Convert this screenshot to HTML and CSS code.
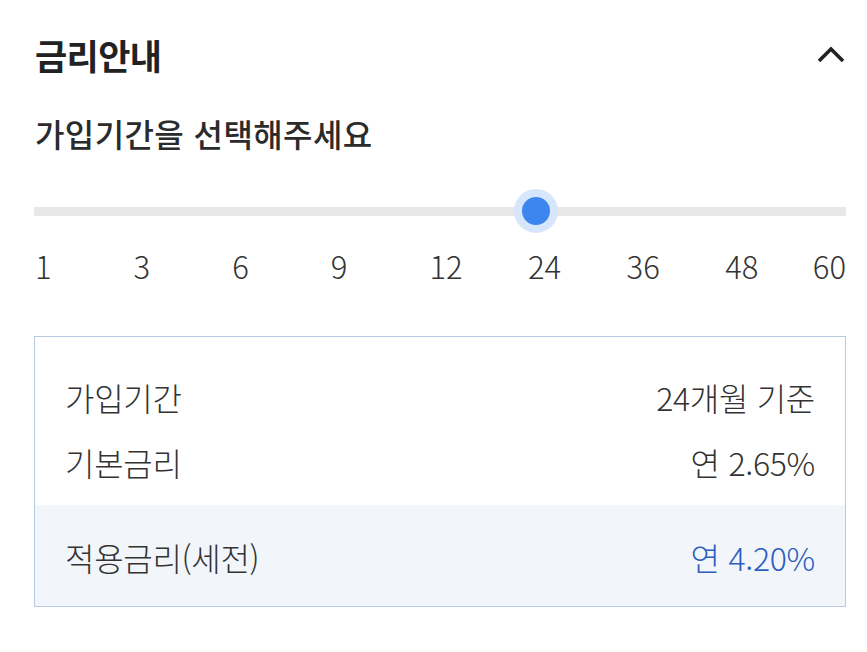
FILE: index.html
```html
<!DOCTYPE html>
<html lang="ko">
<head>
<meta charset="utf-8">
<title>금리안내</title>
<link rel="stylesheet" href="styles.css">
</head>
<body>
<main class="panel">
  <header class="head">
    <h2 class="title">금리안내</h2>
    <button class="toggle" type="button" aria-label="접기">
      <svg width="28" height="18" viewBox="0 0 28 18"><polyline points="2,16 14,4 26,16" fill="none" stroke="#222" stroke-width="3.6" stroke-linecap="butt" stroke-linejoin="miter"/></svg>
    </button>
  </header>
  <h3 class="subtitle">가입기간을 선택해주세요</h3>
  <div class="slider">
    <input class="range" type="range" min="0" max="8" step="1" value="5" aria-label="가입기간">
  </div>
  <div class="ticks">
    <span>1</span><span>3</span><span>6</span><span>9</span><span>12</span><span>24</span><span>36</span><span>48</span><span class="last">60</span>
  </div>
  <section class="card">
    <div class="card-top">
      <div class="row"><span>가입기간</span><span>24개월 기준</span></div>
      <div class="row"><span>기본금리</span><span>연 2.65%</span></div>
    </div>
    <div class="card-bottom">
      <div class="row"><span>적용금리(세전)</span><span class="accent">연 4.20%</span></div>
    </div>
  </section>
</main>
</body>
</html>
```
FILE: styles.css
```css
html, body {
  margin: 0;
  padding: 0;
  background: #fff;
}
body {
  font-family: "Noto Sans CJK KR", "Noto Sans", sans-serif;
  color: #2b2b2b;
}
.panel {
  padding: 30px 21px 0 35px;
}
.head {
  display: flex;
  align-items: center;
  justify-content: space-between;
  height: 50px;
}
.title {
  margin: 0;
  font-size: 35px;
  font-weight: 600;
  line-height: 50px;
  color: #222;
  letter-spacing: -0.6px;
}
.toggle {
  border: 0;
  background: none;
  padding: 0;
  margin: -2px 1px 0 0;
  width: 28px;
  height: 18px;
  display: flex;
}
.subtitle {
  margin: 33px 0 0;
  font-size: 32px;
  font-weight: 500;
  line-height: 40px;
  color: #2b2b2b;
  letter-spacing: 0.4px;
}
.slider {
  margin: 36px 0 0 -1px;
  height: 44px;
}
.range {
  -webkit-appearance: none;
  appearance: none;
  display: block;
  width: 100%;
  height: 44px;
  margin: 0;
  background: transparent;
}
.range::-webkit-slider-runnable-track {
  height: 9px;
  background: #e7e7e7;
  border: 0;
}
.range::-webkit-slider-thumb {
  -webkit-appearance: none;
  appearance: none;
  width: 44px;
  height: 44px;
  margin-top: -17.5px;
  border-radius: 50%;
  box-sizing: border-box;
  background: #3e86ef;
  border: 8px solid #d7e6fb;
}
.ticks {
  display: grid;
  grid-template-columns: repeat(8, 98.6px) minmax(0, 1fr);
  margin-top: 13px;
  font-size: 31px;
  font-weight: 300;
  line-height: 40px;
  color: #333;
}
.ticks .last {
  justify-self: unsafe end;
}
.card {
  margin: 50px 0 0 -1px;
  border: 1px solid #b9c9e2;
}
.card-top {
  padding: 38px 30px 21px;
  display: flex;
  flex-direction: column;
  gap: 21px;
  background: #fff;
}
.card-bottom {
  padding: 30px 30px 27px;
  background: #f2f6fb;
}
.row {
  display: flex;
  justify-content: space-between;
  align-items: center;
  height: 44px;
  font-size: 32px;
  font-weight: 300;
  line-height: 44px;
  color: #333;
  letter-spacing: -0.3px;
}
.accent {
  color: #2c5fbd;
}
```
